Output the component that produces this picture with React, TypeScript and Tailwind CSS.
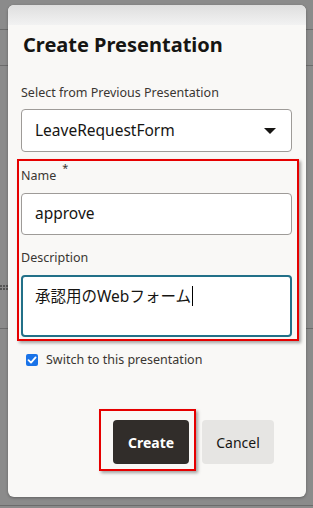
const font = { fontFamily: '"Noto Sans", "Open Sans", "Noto Sans CJK JP", sans-serif' };

const Checkbox = () => (
  <span className="flex h-[12px] w-[12px] items-center justify-center rounded-[2px] bg-[#1a73e8]">
    <svg width="10" height="10" viewBox="0 0 10 10" fill="none">
      <path d="M1.5 5.2 L4 7.6 L8.6 2.4" stroke="white" strokeWidth="1.8" strokeLinecap="round" strokeLinejoin="round" />
    </svg>
  </span>
);

const App = () => {
  return (
    <div className="relative h-[508px] w-[313px] overflow-hidden bg-[#8b8b8b]" style={font}>
      {/* page behind the backdrop */}
      <div className="absolute left-0 top-[29px] h-px w-full bg-[#6c6c6c]" />
      <div className="absolute left-0 top-[65px] h-px w-full bg-[#6c6c6c]" />
      <div className="absolute left-0 top-[328px] h-px w-full bg-[#6c6c6c]" />
      <div className="absolute left-0 top-[505px] h-px w-full bg-[#6c6c6c]" />
      <div className="absolute left-0 top-[285px] grid grid-cols-3 gap-[1px]">
        {[0, 1, 2, 3, 4, 5].map((i) => (
          <span key={i} className="h-[2px] w-[2px] bg-[#555]" />
        ))}
      </div>

      <div className="relative ml-[8px] mt-[5px] h-[492px] w-[298px] overflow-hidden rounded-[6px] bg-[#f9f8f6] shadow-[0_1px_3px_rgba(0,0,0,0.3)]">
        <div className="h-[20px] bg-gradient-to-b from-[#dedede] to-[#f2f2f2]" />

        <h2 className="mt-[7px] pl-[15px] text-[20px] font-bold leading-[26px] text-[#161513]">Create Presentation</h2>

        <div className="px-[13px]">
          <div className="mt-[26px] text-[12.5px] leading-[18px] text-[#3a3632]">Select from Previous Presentation</div>
          <div className="mt-[7px] flex h-[43px] w-[271px] items-center justify-between rounded-[4px] border border-[#9e9b98] bg-white pl-[13px] pr-[15px]">
            <span className="text-[15.5px] text-[#161513]">LeaveRequestForm</span>
            <svg width="12" height="6" viewBox="0 0 12 6">
              <path d="M0 0 H12 L6 6 Z" fill="#161513" />
            </svg>
          </div>

          <div className="-ml-[4px] mt-[7px] w-[282px] border-2 border-[#e60000] px-[2px] pb-[2px] pt-[6px] shadow-[2px_2px_3px_rgba(0,0,0,0.35)]">
            <div className="flex h-[18px] items-start text-[12.5px] leading-[18px] text-[#3a3632]">
              Name<span className="ml-[6px] -mt-[8px] text-[11px]">*</span>
            </div>
            <div className="mt-[8px] flex h-[42px] w-[271px] items-center rounded-[4px] border border-[#9e9b98] bg-white pl-[13px]">
              <span className="text-[15.5px] text-[#161513]">approve</span>
            </div>
            <div className="mt-[14px] text-[12.5px] leading-[18px] text-[#3a3632]">Description</div>
            <div className="mt-[8px] h-[62px] w-[271px] rounded-[4px] border-2 border-[#227088] bg-white pl-[12px] pt-[8px]">
              <div className="flex items-center text-[15.5px] leading-[22px] text-[#161513]">
                承認用のWebフォーム
                <span className="ml-[1px] h-[20px] w-px bg-black" />
              </div>
            </div>
          </div>

          <label className="mt-[10px] flex h-[18px] items-center gap-[8px] pl-[5px] text-[12.5px] text-[#3a3632]">
            <Checkbox />
            Switch to this presentation
          </label>
        </div>

        <div className="mt-[40px] flex items-start pl-[91px]">
          <div className="border-2 border-[#e60000] pb-[5px] pl-[12px] pr-[5px] pt-[9px] shadow-[2px_2px_3px_rgba(0,0,0,0.35)]">
            <button className="flex h-[44px] w-[76px] items-center justify-center rounded-[4px] bg-[#312d2a] text-[14px] font-bold text-white">
              Create
            </button>
          </div>
          <button className="ml-[6px] mt-[11px] flex h-[44px] w-[72px] items-center justify-center rounded-[4px] bg-[#e6e5e3] text-[14px] text-[#161513]">
            Cancel
          </button>
        </div>
      </div>
    </div>
  );
};

export default App;
